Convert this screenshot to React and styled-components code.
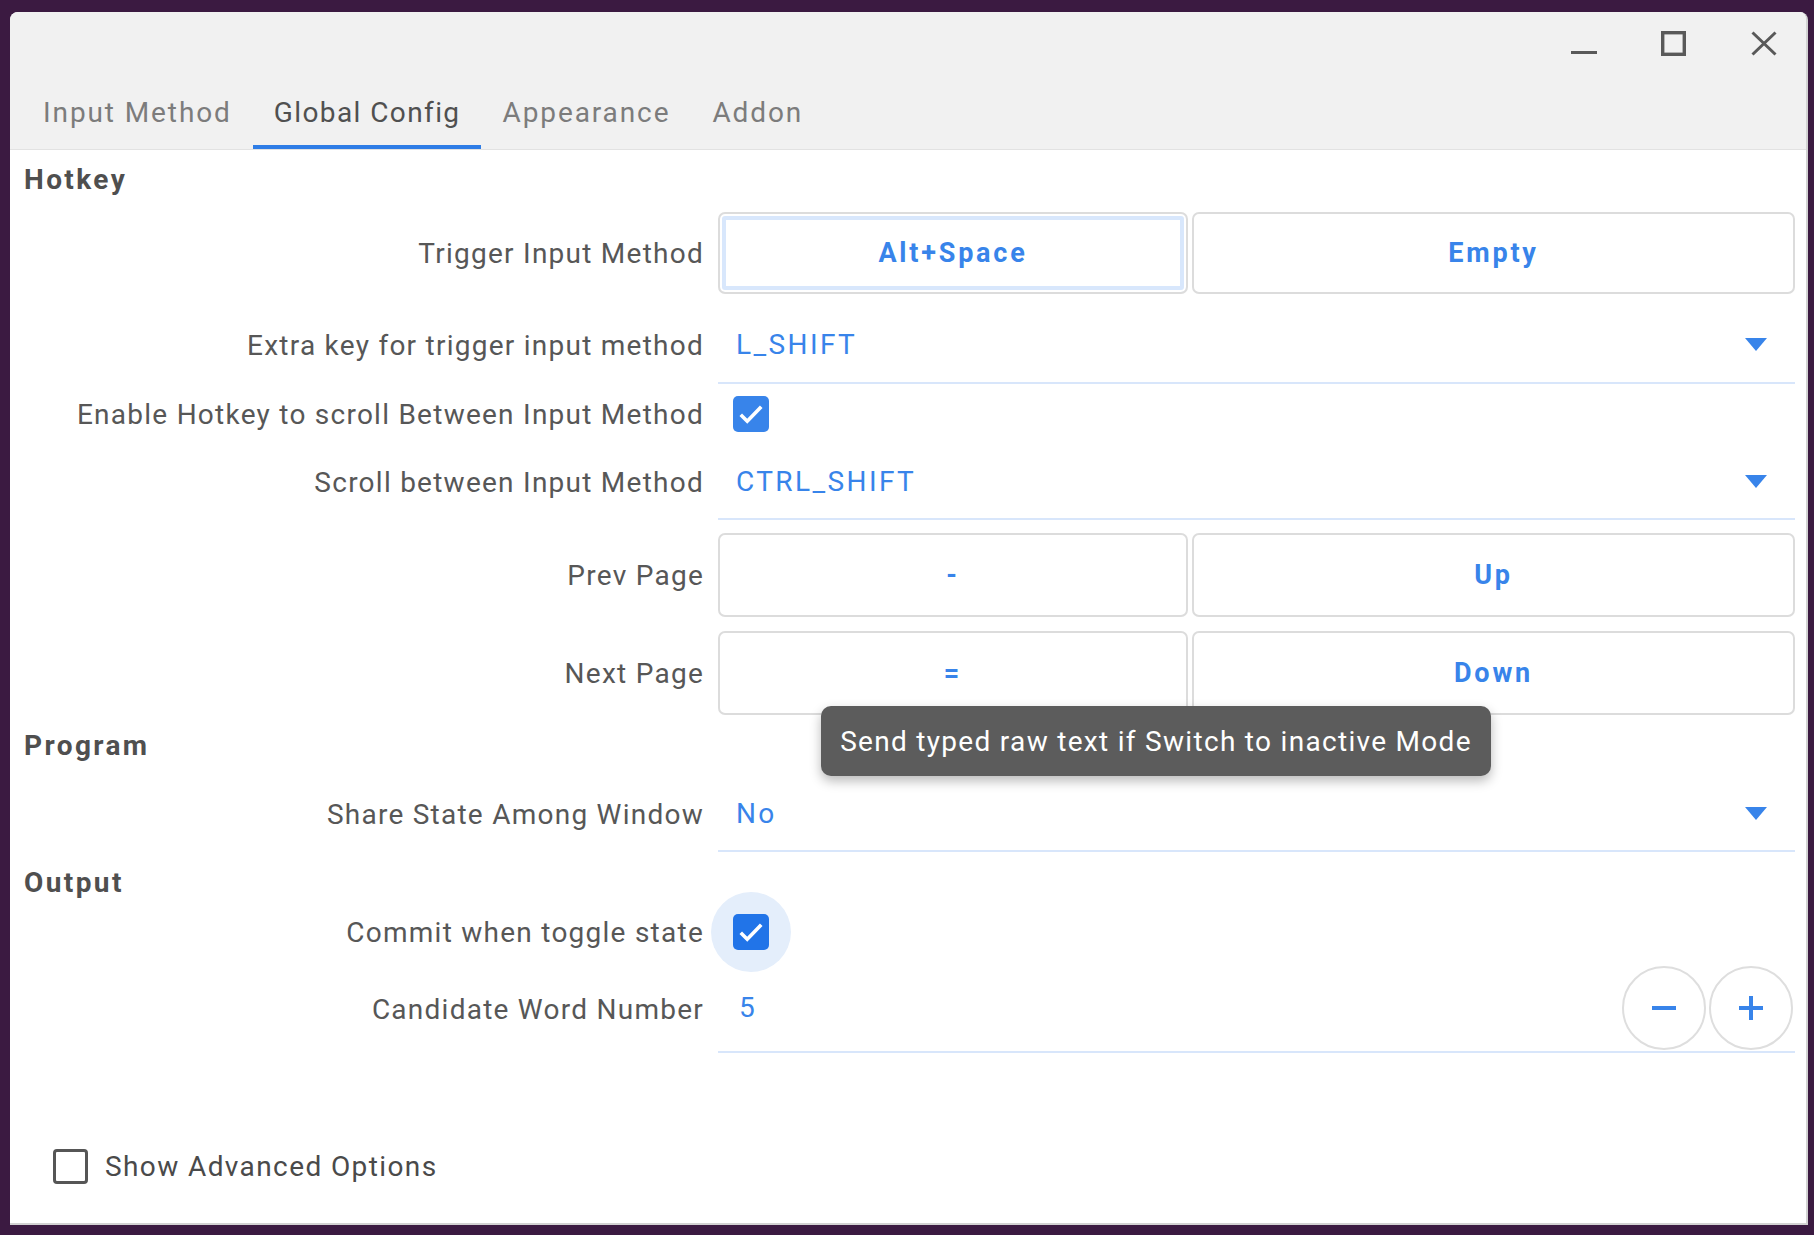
import React from 'react';
import styled, { createGlobalStyle, css } from 'styled-components';

const BLUE = '#3884ea';

const GlobalStyle = createGlobalStyle`
    html, body {
        margin: 0;
        padding: 0;
        background: #3b1a41;
    }
    body {
        font-family: Roboto, "Noto Sans", "Liberation Sans", sans-serif;
    }
`;

const Desktop = styled.div`
    width: 1814px;
    height: 1235px;
    box-sizing: border-box;
    padding: 12px 6px 10px 10px;
    background: #3b1a41;
    display: flex;
`;

const Window = styled.div`
    position: relative;
    flex: 1;
    display: flex;
    flex-direction: column;
    background: #ffffff;
    border-radius: 8px 8px 0 0;
    border-right: 2px solid #d2d2d2;
    border-bottom: 2px solid #d2d2d2;
    overflow: hidden;
`;

const Header = styled.div`
    display: flex;
    flex-direction: column;
    background: #f1f1f1;
    border-bottom: 1px solid #e2e2e2;
`;

const TitleBar = styled.div`
    height: 72px;
    display: flex;
    justify-content: flex-end;
`;

const WinButton = styled.div`
    width: 90px;
    height: 72px;
    display: flex;
    justify-content: flex-end;
    padding: 19px 29px 0 0;
    box-sizing: border-box;
    color: #595959;
`;

const TabBar = styled.div`
    height: 65px;
    display: flex;
    padding-left: 12px;
`;

const Tab = styled.div`
    display: flex;
    align-items: center;
    padding: 0 21px 4px;
    font-size: 28px;
    letter-spacing: 1.9px;
    color: #7c7c7c;
    border-bottom: 4px solid transparent;

    ${({ active }) =>
        active &&
        css`
            letter-spacing: 1.4px;
            color: #505050;
            border-bottom-color: #2f7de6;
        `};
`;

const Body = styled.div`
    flex: 1;
    display: flex;
    flex-direction: column;
    padding: 0 11px 0 14px;
`;

const SectionTitle = styled.div`
    height: ${({ h }) => h}px;
    display: flex;
    align-items: center;
    font-size: 28px;
    font-weight: 700;
    letter-spacing: 2.4px;
    color: #4f4f4f;
`;

const Row = styled.div`
    box-sizing: border-box;
    display: grid;
    grid-template-columns: 680px 1fr;
    column-gap: 14px;
    align-items: center;
    height: ${({ h }) => h}px;
    padding-top: ${({ top }) => top || 0}px;
    margin-top: ${({ mt }) => mt || 0}px;
`;

const Label = styled.div`
    text-align: right;
    white-space: nowrap;
    font-size: 28px;
    letter-spacing: 1.25px;
    color: #575757;
`;

const KeyPair = styled.div`
    display: grid;
    grid-template-columns: 470px 1fr;
    column-gap: 4px;
`;

const KeyButton = styled.div`
    height: ${({ h }) => h}px;
    box-sizing: border-box;
    display: flex;
    align-items: center;
    justify-content: center;
    border: 2px solid #dcdcdc;
    border-radius: 7px;
    background: #ffffff;
    color: ${BLUE};
    font-size: 27px;
    font-weight: 700;
    letter-spacing: 2.8px;

    ${({ focused }) =>
        focused &&
        css`
            box-shadow: inset 0 0 0 2px #ffffff, inset 0 0 0 6px #d8e7fc;
        `};
`;

const Combo = styled.div`
    height: ${({ h }) => h}px;
    box-sizing: border-box;
    display: flex;
    align-items: center;
    justify-content: space-between;
    padding: 0 28px 0 18px;
    border-bottom: 2px solid #d8e6fb;
    color: ${BLUE};
    font-size: 28px;
    letter-spacing: 2.4px;
`;

const Check = styled.div`
    position: relative;
    width: 36px;
    height: 36px;
    margin-left: 15px;
    border-radius: 5px;
    background: ${({ hover }) => (hover ? '#2174e8' : BLUE)};
    display: flex;
    align-items: center;
    justify-content: center;

    ${({ hover }) =>
        hover &&
        css`
            &::before {
                content: '';
                position: absolute;
                left: -22px;
                top: -22px;
                width: 80px;
                height: 80px;
                border-radius: 50%;
                background: #e4eefb;
                z-index: -1;
            }
        `};
`;

const CheckWrap = styled.div`
    position: relative;
    z-index: 0;
    display: flex;
`;

const Spin = styled.div`
    height: 87px;
    box-sizing: border-box;
    display: flex;
    align-items: center;
    justify-content: space-between;
    padding: 0 2px 2px 21px;
    border-bottom: 2px solid #d8e6fb;
    color: ${BLUE};
    font-size: 28px;
`;

const SpinButtons = styled.div`
    display: flex;
    gap: 3px;
`;

const RoundButton = styled.div`
    width: 84px;
    height: 84px;
    box-sizing: border-box;
    border: 2px solid #dedede;
    border-radius: 50%;
    display: flex;
    align-items: center;
    justify-content: center;
`;

const Footer = styled.div`
    margin-top: auto;
    height: 114px;
    display: flex;
    align-items: center;
    gap: 17px;
    padding-left: 29px;
    font-size: 28px;
    letter-spacing: 1.4px;
    color: #4a4a4a;
`;

const EmptyBox = styled.div`
    width: 35px;
    height: 35px;
    box-sizing: border-box;
    border: 3px solid #565656;
    border-radius: 4px;
`;

const Tooltip = styled.div`
    position: absolute;
    left: 811px;
    top: 694px;
    width: 670px;
    height: 70px;
    box-sizing: border-box;
    display: flex;
    align-items: center;
    justify-content: center;
    background: #5c5c5c;
    border-radius: 10px;
    box-shadow: 0 5px 12px rgba(0, 0, 0, 0.28);
    color: #ffffff;
    font-size: 28px;
    letter-spacing: 1.3px;
    white-space: nowrap;
`;

const Arrow = () => (
    <svg width="22" height="13" viewBox="0 0 22 13">
        <polygon points="0,0 22,0 11,13" fill={BLUE} />
    </svg>
);

const Tick = () => (
    <svg width="30" height="30" viewBox="0 0 24 24">
        <path d="M3.8 12.6l5.2 5.2L20.2 6.2" fill="none" stroke="#fff" strokeWidth="2.9" />
    </svg>
);

const tabs = ['Input Method', 'Global Config', 'Appearance', 'Addon'];

const ComboRow = ({ label, value, h, top }) => (
    <Row h={h} top={top}>
        <Label>{label}</Label>
        <Combo h={h - (top || 0)}>
            {value}
            <Arrow />
        </Combo>
    </Row>
);

const KeyRow = ({ label, keys, h, mt, btn, focused }) => (
    <Row h={h} mt={mt}>
        <Label>{label}</Label>
        <KeyPair>
            <KeyButton h={btn} focused={focused}>
                {keys[0]}
            </KeyButton>
            <KeyButton h={btn}>{keys[1]}</KeyButton>
        </KeyPair>
    </Row>
);

export default function App() {
    return (
        <Desktop>
            <GlobalStyle />
            <Window>
                <Header>
                    <TitleBar>
                        <WinButton>
                            <svg width="26" height="25" viewBox="0 0 26 25">
                                <rect x="0" y="20" width="26" height="3" fill="currentColor" />
                            </svg>
                        </WinButton>
                        <WinButton>
                            <svg width="26" height="25" viewBox="0 0 26 25">
                                <rect x="1.7" y="1.7" width="21.6" height="21.6" fill="none" stroke="currentColor" strokeWidth="3.4" />
                            </svg>
                        </WinButton>
                        <WinButton>
                            <svg width="26" height="25" viewBox="0 0 26 25">
                                <path d="M1.5 1.5L24.5 23.5M24.5 1.5L1.5 23.5" stroke="currentColor" strokeWidth="3" />
                            </svg>
                        </WinButton>
                    </TitleBar>
                    <TabBar>
                        {tabs.map((t) => (
                            <Tab key={t} active={t === 'Global Config'}>
                                {t}
                            </Tab>
                        ))}
                    </TabBar>
                </Header>

                <Body>
                    <SectionTitle h={58}>Hotkey</SectionTitle>
                    <KeyRow label="Trigger Input Method" keys={['Alt+Space', 'Empty']} h={90} btn={82} focused />
                    <ComboRow label="Extra key for trigger input method" value="L_SHIFT" h={86} top={8} />
                    <Row h={60}>
                        <Label>Enable Hotkey to scroll Between Input Method</Label>
                        <CheckWrap>
                            <Check>
                                <Tick />
                            </Check>
                        </CheckWrap>
                    </Row>
                    <ComboRow label="Scroll between Input Method" value="CTRL_SHIFT" h={76} />
                    <KeyRow label="Prev Page" keys={['-', 'Up']} h={98} mt={6} btn={84} />
                    <KeyRow label="Next Page" keys={['=', 'Down']} h={98} btn={84} />

                    <SectionTitle h={46}>Program</SectionTitle>
                    <ComboRow label="Share State Among Window" value="No" h={84} top={8} />

                    <SectionTitle h={60}>Output</SectionTitle>
                    <Row h={40}>
                        <Label>Commit when toggle state</Label>
                        <CheckWrap>
                            <Check hover>
                                <Tick />
                            </Check>
                        </CheckWrap>
                    </Row>
                    <Row h={101} top={14}>
                        <Label>Candidate Word Number</Label>
                        <Spin>
                            5
                            <SpinButtons>
                                <RoundButton>
                                    <svg width="24" height="24" viewBox="0 0 24 24">
                                        <rect x="0" y="10" width="24" height="4" fill={BLUE} />
                                    </svg>
                                </RoundButton>
                                <RoundButton>
                                    <svg width="24" height="24" viewBox="0 0 24 24">
                                        <rect x="0" y="10" width="24" height="4" fill={BLUE} />
                                        <rect x="10" y="0" width="4" height="24" fill={BLUE} />
                                    </svg>
                                </RoundButton>
                            </SpinButtons>
                        </Spin>
                    </Row>

                    <Footer>
                        <EmptyBox />
                        Show Advanced Options
                    </Footer>
                </Body>

                <Tooltip>Send typed raw text if Switch to inactive Mode</Tooltip>
            </Window>
        </Desktop>
    );
}
